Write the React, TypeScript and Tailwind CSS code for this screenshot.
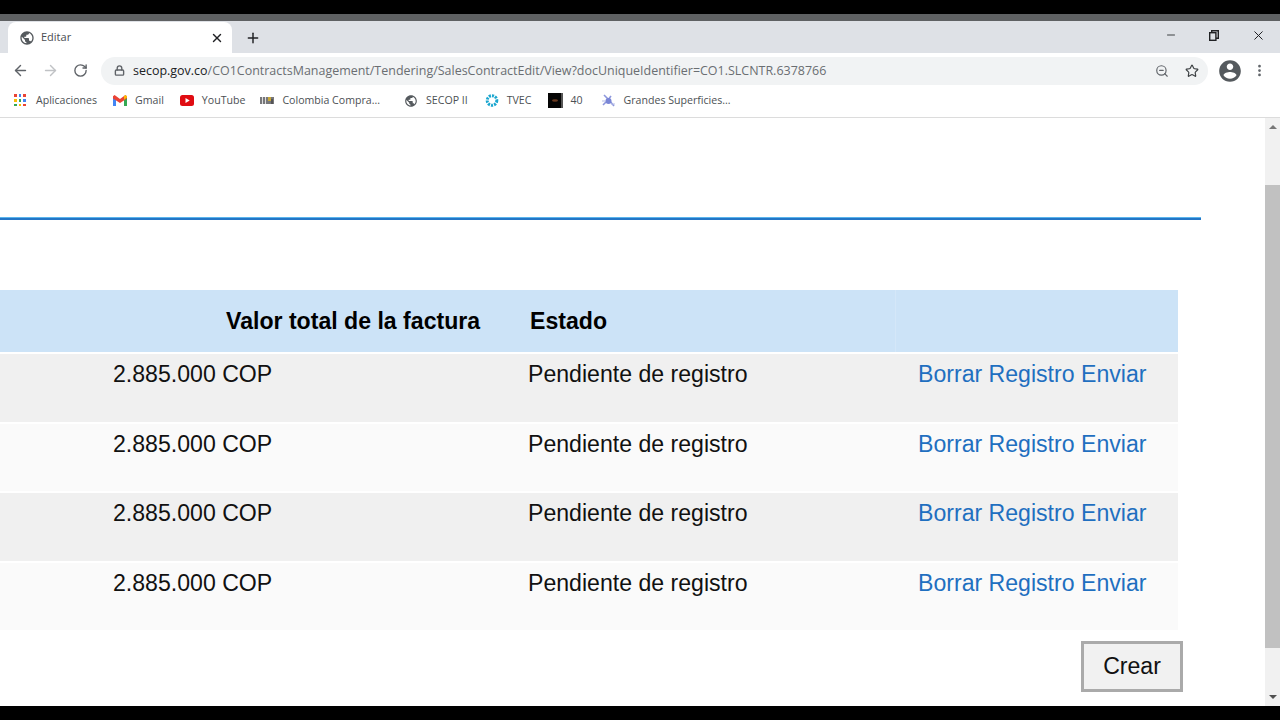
import { ArrowLeft, ArrowRight, RotateCw, Lock, ZoomOut, Star, EllipsisVertical, Minus, X, Plus } from 'lucide-react';

const GLOBE =
  'M12 2C6.48 2 2 6.48 2 12s4.48 10 10 10 10-4.48 10-10S17.52 2 12 2zm-1 17.93c-3.95-.49-7-3.85-7-7.93 0-.62.08-1.21.21-1.79L9 15v1c0 1.1.9 2 2 2v1.93zm6.9-2.54c-.26-.81-1-1.39-1.9-1.39h-1v-3c0-.55-.45-1-1-1H8v-2h2c.55 0 1-.45 1-1V7h2c1.1 0 2-.9 2-2v-.41c2.93 1.19 5 4.06 5 7.41 0 2.08-.8 3.97-2.1 5.39z';
const ACCOUNT =
  'M12 2C6.48 2 2 6.48 2 12s4.48 10 10 10 10-4.48 10-10S17.52 2 12 2zm0 3c1.66 0 3 1.34 3 3s-1.34 3-3 3-3-1.34-3-3 1.34-3 3-3zm0 14.2c-2.5 0-4.71-1.28-6-3.22.03-1.99 4-3.08 6-3.08 1.99 0 5.97 1.09 6 3.08-1.29 1.94-3.5 3.22-6 3.22z';

const Globe = ({ size }: { size: number }) => (
  <svg width={size} height={size} viewBox="0 0 24 24" fill="#555a5e">
    <path d={GLOBE} />
  </svg>
);

const AppsIcon = () => {
  const colors = ['#ea4335', '#4285f4', '#ea4335', '#fbbc04', '#34a853', '#4285f4', '#34a853', '#fbbc04', '#ea4335'];
  return (
    <div className="grid grid-cols-3 gap-[2px] w-3 h-3">
      {colors.map((c, i) => (
        <span key={i} style={{ backgroundColor: c }} className="block w-[2.67px] h-[2.67px]" />
      ))}
    </div>
  );
};

const GmailIcon = () => (
  <svg width="14" height="11" viewBox="0 0 14 11">
    <path d="M0 1.5V11h3V4.5z" fill="#4285f4" />
    <path d="M14 1.5V11h-3V4.5z" fill="#34a853" />
    <path d="M0 1.2 1.6 0 7 4 12.4 0 14 1.2v2.2L7 8 0 3.4z" fill="#ea4335" />
    <path d="M11 4.8 14 2.6V1.2L12.4 0 11 1z" fill="#fbbc04" />
  </svg>
);

const YoutubeIcon = () => (
  <svg width="14" height="11" viewBox="0 0 14 11">
    <rect width="14" height="11" rx="2.5" fill="#e00c12" />
    <path d="M5.5 3v5L9.7 5.5z" fill="#fff" />
  </svg>
);

const ColombiaIcon = () => (
  <svg width="14" height="7" viewBox="0 0 14 7">
    <rect width="14" height="7" fill="#77777a" />
    <rect x="2" y="0" width="1" height="7" fill="#dddddd" />
    <rect x="5" y="0" width="1" height="7" fill="#dddddd" />
    <rect x="8" y="0" width="3" height="4" fill="#c9a93a" />
    <rect x="11.5" y="2" width="1" height="5" fill="#333333" />
  </svg>
);

const TvecIcon = () => (
  <svg width="15" height="15" viewBox="0 0 16 16" fill="none">
    <circle cx="8" cy="8" r="5.5" stroke="#1aa6cf" strokeWidth="3.4" strokeDasharray="2.4 1.2" />
  </svg>
);

const DarkThumb = () => (
  <svg width="15" height="15" viewBox="0 0 15 15">
    <rect width="15" height="15" fill="#050505" />
    <ellipse cx="7" cy="7.5" rx="3" ry="1.2" fill="#6b3a20" />
    <rect x="13" width="2" height="15" fill="#555555" />
  </svg>
);

const GrandesIcon = () => (
  <svg width="15" height="15" viewBox="0 0 15 15" fill="none">
    <path d="M3 2 8 7l5 6M2 12l5-5 3-4" stroke="#8d97dc" strokeWidth="1.6" />
    <circle cx="7.5" cy="8" r="3" fill="#7a86d6" />
    <path d="M1 8h4M10 11h4" stroke="#b5bce8" strokeWidth="1.2" />
  </svg>
);

const RestoreIcon = () => (
  <svg width="10" height="11" viewBox="0 0 10 11" fill="none" stroke="#202124" strokeWidth="1.4">
    <rect x="0.7" y="2.7" width="6.2" height="7.6" />
    <path d="M2.7 2.7V.7h6.6v7.6H7" />
  </svg>
);

const bookmarks = [
  { label: 'Aplicaciones', icon: <AppsIcon />, gap: 'gap-[10px]', width: 'w-3', mr: 'mr-4' },
  { label: 'Gmail', icon: <GmailIcon />, gap: 'gap-2', width: 'w-[14px]', mr: 'mr-4' },
  { label: 'YouTube', icon: <YoutubeIcon />, gap: 'gap-2', width: 'w-[14px]', mr: 'mr-[15px]' },
  { label: 'Colombia Compra...', icon: <ColombiaIcon />, gap: 'gap-2', width: 'w-[14px]', mr: 'mr-6' },
  { label: 'SECOP II', icon: <Globe size={16} />, gap: 'gap-2', width: 'w-[14px]', mr: 'mr-[17px]' },
  { label: 'TVEC', icon: <TvecIcon />, gap: 'gap-2', width: 'w-[14px]', mr: 'mr-[17px]' },
  { label: '40', icon: <DarkThumb />, gap: 'gap-[7px]', width: 'w-[15px]', mr: 'mr-[18px]' },
  { label: 'Grandes Superficies...', icon: <GrandesIcon />, gap: 'gap-2', width: 'w-[15px]', mr: '' },
];

const rows = ['bg-[#f0f0f0]', 'bg-[#fafafa]', 'bg-[#f0f0f0]', 'bg-[#fafafa]'];

function BrowserChrome() {
  return (
    <div className="font-['Open_Sans',sans-serif] text-[#3c4043]">
      <div className="h-[14px] bg-black" />
      <div className="h-[7px] bg-[#5f6163]" />
      {/* Tab strip */}
      <div className="h-[32px] bg-[#dee1e6] flex items-end pl-2 pr-[14px]">
        <div className="w-[224px] h-[31px] bg-white rounded-t-lg flex items-center pl-[11px] pr-2">
          <Globe size={16} />
          <span className="ml-[6px] text-[11px] text-[#4a4d51]">Editar</span>
          <X size={14} strokeWidth={2.4} className="ml-auto text-[#202124]" />
        </div>
        <div className="h-[31px] flex items-center ml-[13px]">
          <Plus size={16} strokeWidth={2.2} className="text-[#202124]" />
        </div>
        <div className="ml-auto h-[32px] flex items-center gap-[32px] pb-1">
          <Minus size={12} strokeWidth={2} className="text-[#3c4043]" />
          <RestoreIcon />
          <X size={15} strokeWidth={1.6} className="text-[#202124]" />
        </div>
      </div>
      {/* Toolbar */}
      <div className="h-[35px] bg-white flex items-center">
        <ArrowLeft size={17} strokeWidth={2} className="ml-3 text-[#5f6368]" />
        <ArrowRight size={17} strokeWidth={2} className="ml-[13px] text-[#c0c2c5]" />
        <RotateCw size={15} strokeWidth={2.2} className="ml-[14px] text-[#5f6368]" />
        <div className="ml-[13px] w-[1107px] h-[28px] rounded-full bg-[#f1f3f4] flex items-center pl-[13px] pr-[9px]">
          <Lock size={11} strokeWidth={3} className="text-[#5f6368]" />
          <span className="ml-[8px] text-[12.47px] text-[#6a6e72] whitespace-nowrap pt-px">
            <span className="text-[#202124]">secop.gov.co</span>/CO1ContractsManagement/Tendering/SalesContractEdit/View?docUniqueIdentifier=CO1.SLCNTR.6378766
          </span>
          <ZoomOut size={14} strokeWidth={2} className="ml-auto text-[#5f6368]" />
          <Star size={14} strokeWidth={2} className="ml-[16px] text-[#3c4043]" />
        </div>
        <svg width="26" height="26" viewBox="0 0 24 24" fill="#555a5e" className="ml-[9px]">
          <path d={ACCOUNT} />
        </svg>
        <EllipsisVertical size={15} strokeWidth={2.4} className="ml-[9px] text-[#5f6368]" />
      </div>
      {/* Bookmarks */}
      <div className="h-[30px] bg-white border-b border-[#dcdcdc] flex items-center pl-[14px] pb-1 text-[10.6px] text-[#4c5054]">
        {bookmarks.map((b) => (
          <div key={b.label} className={`flex items-center ${b.gap} ${b.mr}`}>
            <div className={`${b.width} flex justify-center`}>{b.icon}</div>
            <span className="whitespace-nowrap">{b.label}</span>
          </div>
        ))}
      </div>
    </div>
  );
}

function InvoiceTable() {
  return (
    <div className="font-['Liberation_Sans',sans-serif] text-[23.1px] text-[#111111]">
      <div className="w-[1178px] h-[62px] bg-[#cce3f7] grid grid-cols-[513px_382px_283px] items-center font-bold text-black">
        <div className="pl-[226px] whitespace-nowrap">Valor total de la factura</div>
        <div className="pl-[17px]">Estado</div>
        <div className="h-full border-l border-[#d4e7f8]" />
      </div>
      <div className="mt-[2px] flex flex-col gap-[2px]">
        {rows.map((bg, i) => (
          <div key={i} className={`w-[1178px] h-[67.5px] ${bg} grid grid-cols-[513px_382px_283px] pt-[6px] leading-[28px]`}>
            <div className="pl-[113px] whitespace-nowrap">2.885.000 COP</div>
            <div className="pl-[15px] whitespace-nowrap">Pendiente de registro</div>
            <div className="pl-[23px] whitespace-nowrap text-[#1f6fc0]">Borrar Registro Enviar</div>
          </div>
        ))}
      </div>
    </div>
  );
}

export default function App() {
  return (
    <div className="w-[1280px] h-[720px] overflow-hidden flex flex-col bg-white">
      <BrowserChrome />
      <div className="h-[588px] flex">
        <main className="w-[1265px]">
          <div className="mt-[99px] w-[1201px] h-[3px] bg-[#2476c6] border-t border-[#5ab4ec]" />
          <div className="mt-[70px]">
            <InvoiceTable />
          </div>
          <div className="mt-[11px] pl-[1081px]">
            <button className="w-[102px] h-[51px] bg-[#f1f1f1] border-[3px] border-[#aaaaaa] font-['Liberation_Sans',sans-serif] text-[23.1px] text-[#111111]">
              Crear
            </button>
          </div>
        </main>
        {/* Scrollbar */}
        <div className="w-[15px] bg-[#f1f1f1] flex flex-col items-center">
          <div className="h-[18px] flex items-center">
            <div className="w-0 h-0 border-x-[4px] border-x-transparent border-b-[4px] border-b-[#777777]" />
          </div>
          <div className="mt-[49px] w-full h-[463px] bg-[#c1c1c1]" />
          <div className="mt-auto h-[18px] flex items-center">
            <div className="w-0 h-0 border-x-[4px] border-x-transparent border-t-[4px] border-t-[#505050]" />
          </div>
        </div>
      </div>
      <div className="h-[14px] bg-black" />
    </div>
  );
}
